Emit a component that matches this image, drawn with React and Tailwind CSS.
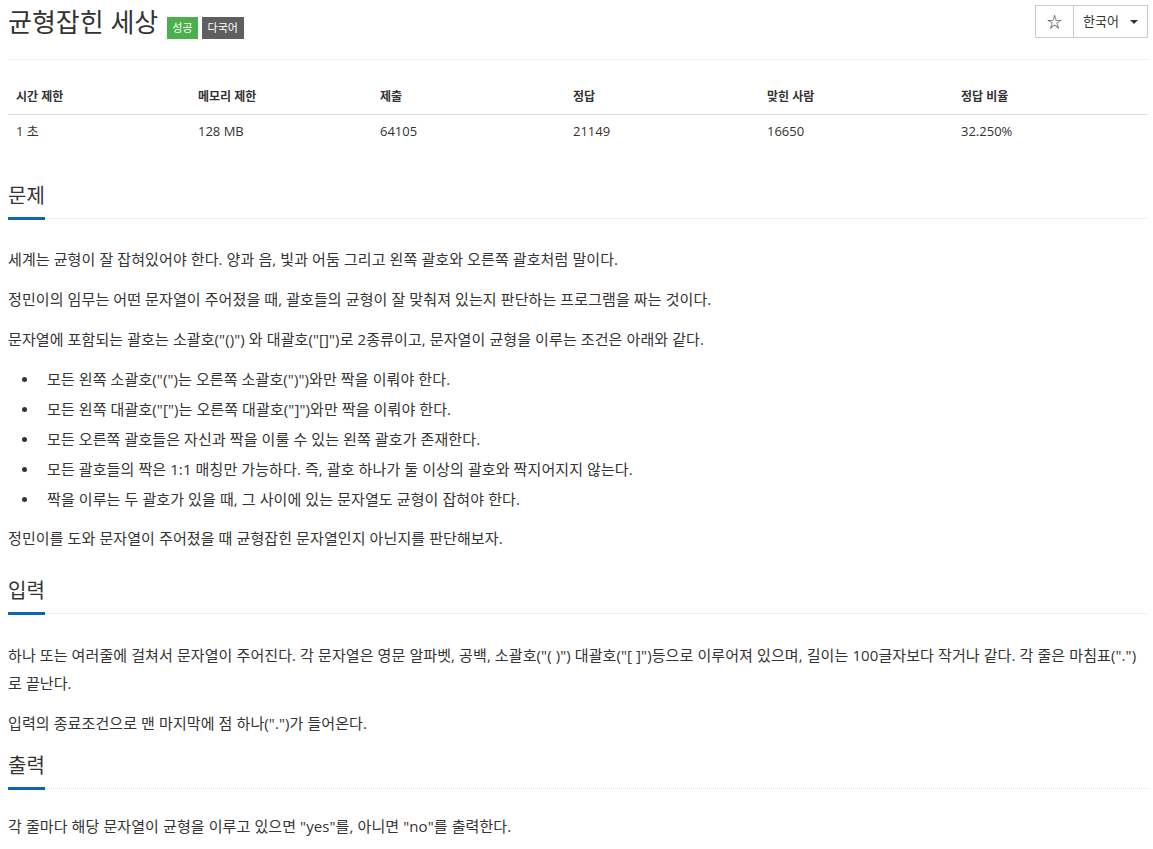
import React from "react";

function SectionHeading({ children, className = "" }) {
  return (
    <h2
      className={
        "flex text-[20px] leading-[30px] font-normal text-[#333] border-b border-dotted border-[#ddd] " +
        className
      }
    >
      <span className="block border-b-[3px] border-[#0d64b4] -mb-[2px] pb-[6px]">{children}</span>
    </h2>
  );
}

function Li({ children }) {
  return (
    <li className="flex items-center leading-[30px]">
      <span className="w-[5px] h-[5px] rounded-full bg-[#333] mr-[20px] shrink-0" />
      <span>{children}</span>
    </li>
  );
}

export default function App() {
  const headers = ["시간 제한", "메모리 제한", "제출", "정답", "맞힌 사람", "정답 비율"];
  const values = ["1 초", "128 MB", "64105", "21149", "16650", "32.250%"];
  const widths = ["w-[182px]", "w-[182px]", "w-[193px]", "w-[194px]", "w-[194px]", ""];

  return (
    <div className="min-h-[849px] bg-white pl-[8px] pr-[5px] text-[#333] font-['Open_Sans','Noto_Sans_CJK_KR',sans-serif]">
      {/* Header */}
      <div className="flex items-start justify-between pt-[5px]">
        <div className="flex items-end">
          <h1 className="text-[26px] leading-[34px] font-normal text-[#333]">균형잡힌 세상</h1>
          <span className="ml-[9px] h-[22px] flex items-center px-[5px] text-[11px] text-white bg-[#4cae4c]">성공</span>
          <span className="ml-[4px] h-[22px] flex items-center px-[6px] text-[11px] text-white bg-[#5f5f5f]">다국어</span>
        </div>
        <div className="flex h-[33px] border border-[#ccc] text-[13px] text-[#333]">
          <button className="w-[38px] flex items-center justify-center border-r border-[#ccc] text-[15px]">☆</button>
          <button className="w-[73px] flex items-center pl-[9px] gap-[11px]">
            <span>한국어</span>
            <svg width="8" height="4" viewBox="0 0 8 4">
              <path d="M0 0 L8 0 L4 4 Z" fill="#333" />
            </svg>
          </button>
        </div>
      </div>

      <div className="mt-[20px] border-t border-[#eee]" />

      {/* Info table */}
      <table className="mt-[20px] w-full border-collapse text-[13px]">
        <thead>
          <tr>
            {headers.map((h, i) => (
              <th
                key={h}
                className={"text-left font-bold text-[12px] px-[8px] h-[34px] border-b border-[#ddd] " + widths[i]}
              >
                {h}
              </th>
            ))}
          </tr>
        </thead>
        <tbody>
          <tr>
            {values.map((v) => (
              <td key={v} className="text-left px-[8px] h-[35px]">
                {v}
              </td>
            ))}
          </tr>
        </tbody>
      </table>

      {/* 문제 */}
      <SectionHeading className="mt-[32px]">문제</SectionHeading>
      <div className="mt-[26px] text-[15px] leading-[28px] tracking-[0.1px]">
        <p className="mb-[12px]">
          세계는 균형이 잘 잡혀있어야 한다. 양과 음, 빛과 어둠 그리고 왼쪽 괄호와 오른쪽 괄호처럼 말이다.
        </p>
        <p className="mb-[12px]">
          정민이의 임무는 어떤 문자열이 주어졌을 때, 괄호들의 균형이 잘 맞춰져 있는지 판단하는 프로그램을 짜는 것이다.
        </p>
        <p className="mb-[12px]">
          문자열에 포함되는 괄호는 소괄호("()") 와 대괄호("[]")로 2종류이고, 문자열이 균형을 이루는 조건은 아래와 같다.
        </p>
        <ul className="pl-[14px] mb-[10px] -mt-[1px]">
          <Li>모든 왼쪽 소괄호("(")는 오른쪽 소괄호(")")와만 짝을 이뤄야 한다.</Li>
          <Li>모든 왼쪽 대괄호("[")는 오른쪽 대괄호("]")와만 짝을 이뤄야 한다.</Li>
          <Li>모든 오른쪽 괄호들은 자신과 짝을 이룰 수 있는 왼쪽 괄호가 존재한다.</Li>
          <Li>모든 괄호들의 짝은 1:1 매칭만 가능하다. 즉, 괄호 하나가 둘 이상의 괄호와 짝지어지지 않는다.</Li>
          <Li>짝을 이루는 두 괄호가 있을 때, 그 사이에 있는 문자열도 균형이 잡혀야 한다.</Li>
        </ul>
        <p>정민이를 도와 문자열이 주어졌을 때 균형잡힌 문자열인지 아닌지를 판단해보자.</p>
      </div>

      {/* 입력 */}
      <SectionHeading className="mt-[24px]">입력</SectionHeading>
      <div className="mt-[27px] text-[15px] leading-[28px] tracking-[0.1px]">
        <p className="mb-[12px]">
          하나 또는 여러줄에 걸쳐서 문자열이 주어진다. 각 문자열은 영문 알파벳, 공백, 소괄호("( )") 대괄호("[ ]")등으로 이루어져 있으며, 길이는 100글자보다 작거나 같다. 각 줄은 마침표(".")로 끝난다.
        </p>
        <p>입력의 종료조건으로 맨 마지막에 점 하나(".")가 들어온다.</p>
      </div>

      {/* 출력 */}
      <SectionHeading className="mt-[14px]">출력</SectionHeading>
      <div className="mt-[23px] text-[15px] leading-[28px] tracking-[0.1px]">
        <p>각 줄마다 해당 문자열이 균형을 이루고 있으면 "yes"를, 아니면 "no"를 출력한다.</p>
      </div>
    </div>
  );
}
